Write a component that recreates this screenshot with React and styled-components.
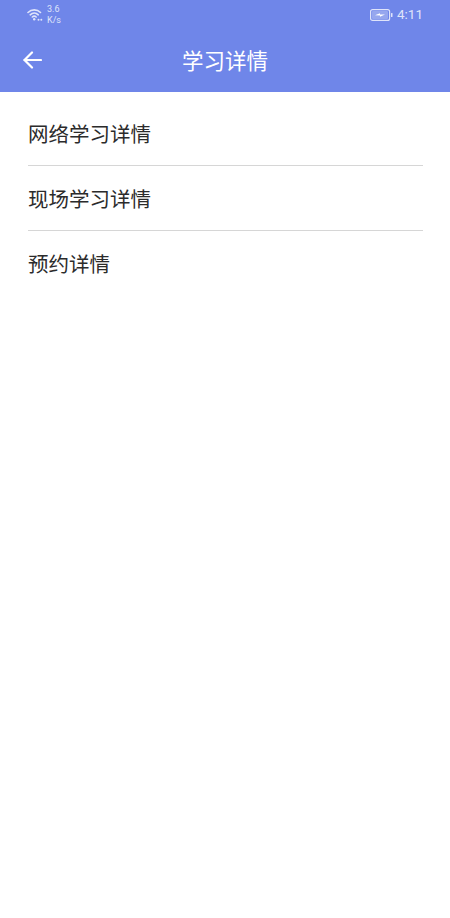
import React from 'react';
import styled, { createGlobalStyle } from 'styled-components';

const GlobalStyle = createGlobalStyle`
  html, body {
    margin: 0;
    padding: 0;
    background: #fff;
    font-family: "Noto Sans CJK SC", "Noto Sans", sans-serif;
  }
`;

const Page = styled.div`
  width: 450px;
  height: 918px;
  background: #fff;
  overflow: hidden;
`;

const Header = styled.header`
  height: 92px;
  background: #6f86e9;
  color: #fff;
  display: flex;
  flex-direction: column;
`;

const StatusBar = styled.div`
  height: 29px;
  padding: 0 27px;
  display: flex;
  align-items: center;
  justify-content: space-between;
  color: #dfe4fa;
`;

const StatusGroup = styled.div`
  display: flex;
  align-items: center;
  gap: ${props => props.gap || 5}px;
`;

const Speed = styled.div`
  font-family: Roboto, sans-serif;
  font-size: 9px;
  line-height: 11px;
  text-align: left;
`;

const Clock = styled.span`
  font-family: Roboto, sans-serif;
  font-size: 13.5px;
  margin-bottom: 2px;
`;

const NavBar = styled.div`
  flex: 1;
  position: relative;
  display: flex;
  align-items: center;
  justify-content: center;
  padding-bottom: 2px;
`;

const BackButton = styled.div`
  position: absolute;
  left: 23px;
  top: 22px;
  width: 19px;
  height: 18px;
  line-height: 0;
`;

const Title = styled.h1`
  margin: 0;
  font-size: 21.5px;
  font-weight: 400;
  line-height: 30px;
`;

const List = styled.ul`
  list-style: none;
  margin: 0;
  padding: 9px 27px 0 28px;
`;

const Item = styled.li`
  height: 64px;
  display: flex;
  align-items: center;
  font-size: 20.5px;
  color: #2b2b2b;
  border-bottom: ${props => (props.last ? 'none' : '1px solid #d6d6d6')};
`;

const WifiIcon = () => (
  <svg width="16" height="14" viewBox="0 0 16 14" fill="none" stroke="currentColor" strokeWidth="1.6" strokeLinecap="round">
    <path d="M1 4.500C4.500 1 10 1 13.500 4.500" />
    <path d="M3.200 6.800C5.500 4.600 9 4.600 11.300 6.800" />
    <path d="M5.300 9C6.400 8 8.100 8 9.200 9" />
    <circle cx="7.200" cy="11.300" r="1.200" fill="currentColor" stroke="none" />
    <circle cx="11.500" cy="11.800" r="1" fill="currentColor" stroke="none" />
    <circle cx="14.300" cy="11.800" r="1" fill="currentColor" stroke="none" />
  </svg>
);

const BatteryIcon = () => (
  <svg width="23" height="12" viewBox="0 0 23 12" fill="none">
    <rect x="0.600" y="0.600" width="19" height="10.800" rx="2" stroke="currentColor" strokeWidth="1.200" />
    <rect x="2" y="2" width="16" height="8" rx="1" fill="currentColor" opacity="0.35" />
    <path d="M5 6.200L10 4.200V5.500H15L10 7.800V6.500Z" fill="#fff" />
    <rect x="21" y="4" width="1.500" height="4" rx="0.500" fill="currentColor" />
  </svg>
);

const BackIcon = () => (
  <svg width="19" height="18" viewBox="0 0 19 18" fill="none" stroke="#fff" strokeWidth="2.200" strokeLinecap="round" strokeLinejoin="round">
    <path d="M18 9H1.500" />
    <path d="M9 1.500L1.500 9L9 16.500" />
  </svg>
);

const items = ['网络学习详情', '现场学习详情', '预约详情'];

const App = () => {
  return (
    <Page>
      <GlobalStyle />
      <Header>
        <StatusBar>
          <StatusGroup gap={4}>
            <WifiIcon />
            <Speed>3.6<br />K/s</Speed>
          </StatusGroup>
          <StatusGroup gap={4}>
            <BatteryIcon />
            <Clock>4:11</Clock>
          </StatusGroup>
        </StatusBar>
        <NavBar>
          <BackButton><BackIcon /></BackButton>
          <Title>学习详情</Title>
        </NavBar>
      </Header>
      <List>
        {items.map((item, i) => (
          <Item key={item} last={i === items.length - 1}>{item}</Item>
        ))}
      </List>
    </Page>
  );
};

export default App;
